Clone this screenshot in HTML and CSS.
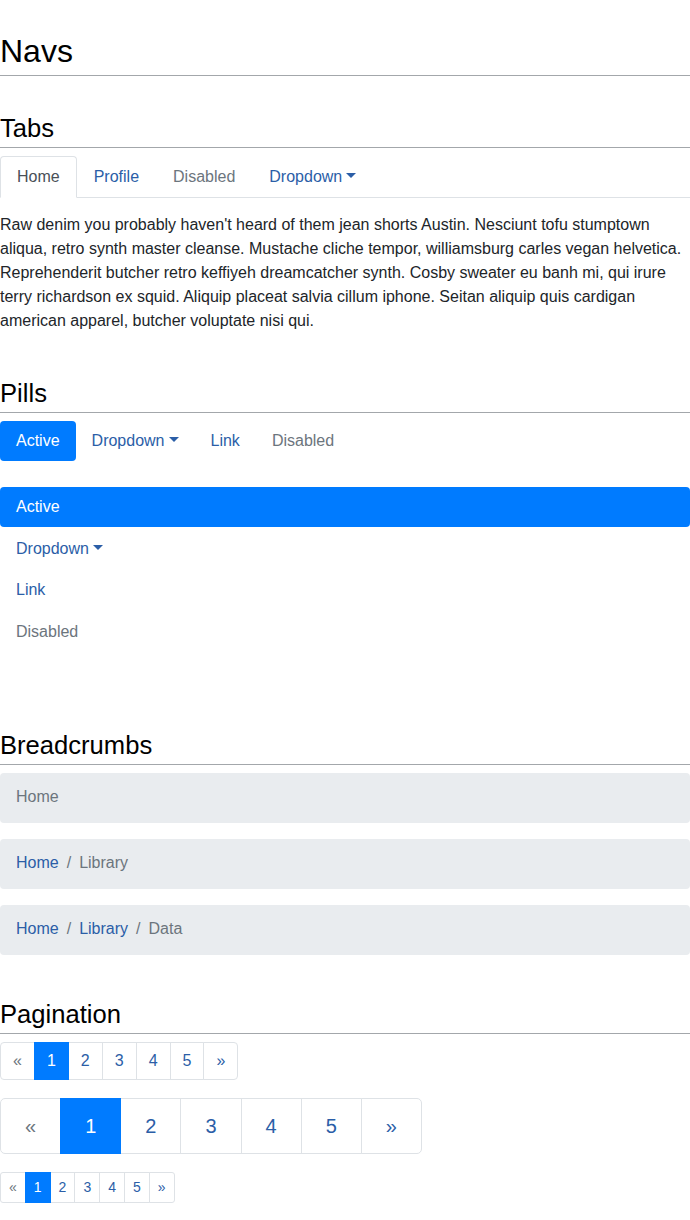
FILE: index.html
```html
<!DOCTYPE html>
<html lang="en">
<head>
<meta charset="utf-8">
<title>Navs</title>
<link rel="stylesheet" href="styles.css">
</head>
<body>
<h1 class="page-title">Navs</h1>

<section class="section section-tabs">
  <h2 class="section-title">Tabs</h2>
  <ul class="tabs">
    <li><a class="tab active">Home</a></li>
    <li><a class="tab">Profile</a></li>
    <li><a class="tab disabled">Disabled</a></li>
    <li><a class="tab caret">Dropdown</a></li>
  </ul>
  <div class="tab-content">
    <p>Raw denim you probably haven't heard of them jean shorts Austin. Nesciunt tofu stumptown aliqua, retro synth master cleanse. Mustache cliche tempor, williamsburg carles vegan helvetica. Reprehenderit butcher retro keffiyeh dreamcatcher synth. Cosby sweater eu banh mi, qui irure terry richardson ex squid. Aliquip placeat salvia cillum iphone. Seitan aliquip quis cardigan american apparel, butcher voluptate nisi qui.</p>
  </div>
</section>

<section class="section section-pills">
  <h2 class="section-title">Pills</h2>
  <ul class="pills">
    <li><a class="pill active">Active</a></li>
    <li><a class="pill caret">Dropdown</a></li>
    <li><a class="pill">Link</a></li>
    <li><a class="pill disabled">Disabled</a></li>
  </ul>
  <ul class="pills stacked">
    <li><a class="pill active">Active</a></li>
    <li><a class="pill caret">Dropdown</a></li>
    <li><a class="pill">Link</a></li>
    <li><a class="pill disabled">Disabled</a></li>
  </ul>
</section>

<section class="section section-crumbs">
  <h2 class="section-title">Breadcrumbs</h2>
  <ol class="breadcrumb">
    <li class="crumb current">Home</li>
  </ol>
  <ol class="breadcrumb">
    <li class="crumb"><a>Home</a></li>
    <li class="crumb current">Library</li>
  </ol>
  <ol class="breadcrumb">
    <li class="crumb"><a>Home</a></li>
    <li class="crumb"><a>Library</a></li>
    <li class="crumb current">Data</li>
  </ol>
</section>

<section class="section section-pages">
  <h2 class="section-title">Pagination</h2>
  <ul class="pagination">
    <li class="page disabled"><a>&laquo;</a></li>
    <li class="page active"><a>1</a></li>
    <li class="page"><a>2</a></li>
    <li class="page"><a>3</a></li>
    <li class="page"><a>4</a></li>
    <li class="page"><a>5</a></li>
    <li class="page"><a>&raquo;</a></li>
  </ul>
  <ul class="pagination pagination-lg">
    <li class="page disabled"><a>&laquo;</a></li>
    <li class="page active"><a>1</a></li>
    <li class="page"><a>2</a></li>
    <li class="page"><a>3</a></li>
    <li class="page"><a>4</a></li>
    <li class="page"><a>5</a></li>
    <li class="page"><a>&raquo;</a></li>
  </ul>
  <ul class="pagination pagination-sm">
    <li class="page disabled"><a>&laquo;</a></li>
    <li class="page active"><a>1</a></li>
    <li class="page"><a>2</a></li>
    <li class="page"><a>3</a></li>
    <li class="page"><a>4</a></li>
    <li class="page"><a>5</a></li>
    <li class="page"><a>&raquo;</a></li>
  </ul>
</section>
</body>
</html>
```

FILE: styles.css
```css
* { box-sizing: border-box; }

html, body {
  margin: 0;
  padding: 0;
  background: #fff;
}

body {
  font-family: "Liberation Sans", Arial, sans-serif;
  font-size: 16px;
  line-height: 1.5;
  color: #212529;
}

a { text-decoration: none; cursor: pointer; }

ul, ol { list-style: none; margin: 0; padding: 0; }

p { margin: 0; }

.page-title {
  margin: 27px 0 0;
  font-size: 32px;
  font-weight: 400;
  line-height: 48px;
  color: #000;
  border-bottom: 1px solid #a3a7ab;
}

.section-title {
  margin: 0 0 8px;
  font-size: 25.6px;
  font-weight: 400;
  line-height: 38px;
  color: #000;
  border-bottom: 1px solid #a3a7ab;
}

.section-tabs { margin-top: 33px; }
.section-pills { margin-top: 41px; }
.section-crumbs { margin-top: 74px; }
.section-pages { margin-top: 40px; }

/* Tabs */
.tabs {
  display: flex;
  border-bottom: 1px solid #dee2e6;
}
.tabs li { margin-bottom: -1px; }
.tab {
  display: block;
  padding: 8px 16px;
  border: 1px solid transparent;
  border-radius: 4px 4px 0 0;
  color: #2b5ea7;
}
.tab.active {
  color: #495057;
  background: #fff;
  border-color: #dee2e6 #dee2e6 #fff;
}
.tab.disabled { color: #6c757d; }

.tab-content { margin-top: 15px; }

/* caret */
.caret::after {
  content: "";
  display: inline-block;
  margin-left: 4px;
  vertical-align: 4px;
  border-top: 5px solid;
  border-right: 5px solid transparent;
  border-left: 5px solid transparent;
  border-bottom: 0;
}

/* Pills */
.pills { display: flex; }
.pill {
  display: block;
  padding: 8px 16px;
  border-radius: 4px;
  color: #2b5ea7;
}
.pill.active { background: #007bff; color: #fff; }
.pill.disabled { color: #6c757d; }

.pills.stacked {
  flex-direction: column;
  gap: 1.7px;
  margin-top: 26px;
}

/* Breadcrumbs */
.breadcrumb {
  display: flex;
  padding: 12px 16px 14px;
  margin-bottom: 16px;
  background: #e9ecef;
  border-radius: 4px;
}
.crumb a { color: #2b5ea7; }
.crumb.current { color: #6c757d; }
.crumb + .crumb { padding-left: 8px; }
.crumb + .crumb::before {
  content: "/";
  padding-right: 8px;
  color: #6c757d;
}

/* Pagination */
.pagination {
  display: flex;
  margin-bottom: 18px;
}
.pagination:last-child { margin-bottom: 0; }
.page a {
  display: block;
  padding: 8px 12px;
  margin-left: -1px;
  line-height: 20px;
  color: #2b5ea7;
  background: #fff;
  border: 1px solid #dee2e6;
}
.page:first-child a {
  margin-left: 0;
  border-radius: 4px 0 0 4px;
}
.page:last-child a { border-radius: 0 4px 4px 0; }
.page.active a {
  position: relative;
  z-index: 1;
  color: #fff;
  background: #007bff;
  border-color: #007bff;
}
.page.disabled a { color: #6c757d; }

.pagination-lg .page a {
  padding: 12px 24px;
  font-size: 20px;
  line-height: 30px;
}
.pagination-lg .page:first-child a { border-radius: 5px 0 0 5px; }
.pagination-lg .page:last-child a { border-radius: 0 5px 5px 0; }

.pagination-sm .page a {
  padding: 4px 8px;
  font-size: 14px;
  line-height: 21px;
}
.pagination-sm .page:first-child a { border-radius: 3px 0 0 3px; }
.pagination-sm .page:last-child a { border-radius: 0 3px 3px 0; }
```
